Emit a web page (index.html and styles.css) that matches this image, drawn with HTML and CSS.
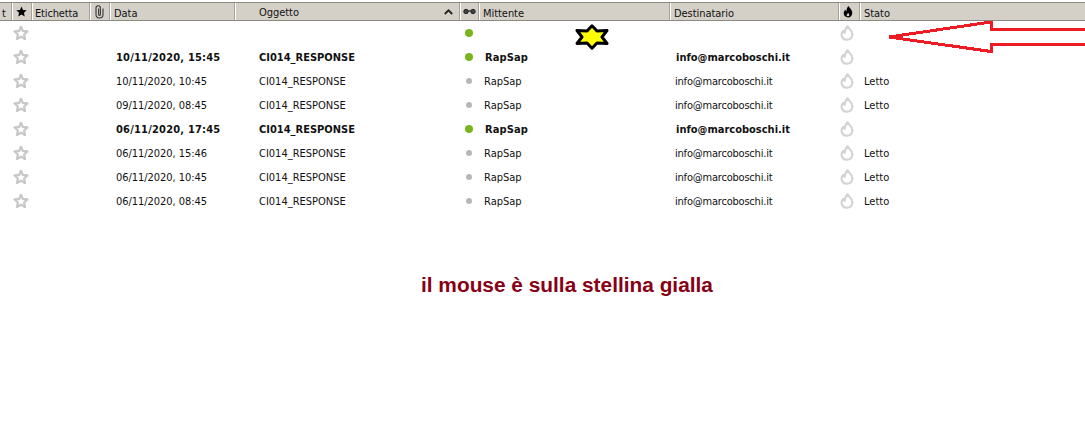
FILE: index.html
```html
<!DOCTYPE html>
<html lang="it">
<head>
<meta charset="utf-8">
<title>Posta</title>
<link rel="stylesheet" href="styles.css">
</head>
<body>
<svg class="sprites" width="0" height="0" aria-hidden="true">
  <symbol id="star" viewBox="0 0 16 16"><path d="M8 1.800l1.900 4.100 4.500.5-3.300 3.100.9 4.500L8 11.700 4 14l.9-4.500L1.600 6.400l4.500-.5z" fill="#fff" stroke="#c8c8c8" stroke-width="2.300" stroke-linejoin="round"/></symbol>
  <symbol id="flame" viewBox="0 0 14 16"><path d="M7.500 1.200c.2 1.900 5 3.500 5 8.200 0 3.200-2.500 5.400-5.500 5.400s-5.500-2.200-5.500-5c0-1.700.8-3.100 1.900-4 .1 1 .4 1.600 1.200 2 .2-2.400 1.200-4.800 2.900-6.600z" fill="#fff" stroke="#d2d2d2" stroke-width="2.100" stroke-linejoin="round"/></symbol>
</svg>
<div class="list">
  <div class="row head">
    <div class="hc"><span class="cut">t</span></div>
    <div class="hc center icon-star"><svg class="ico" width="11" height="11" viewBox="0 0 16 16"><path d="M8 .8l2.200 4.900 5.300.6-3.900 3.600 1.100 5.300L8 12.500l-4.700 2.700 1.100-5.300L.5 6.300l5.300-.6z" fill="#000"/></svg></div>
    <div class="hc label-tight">Etichetta</div>
    <div class="hc center icon-clip"><svg class="ico" width="9" height="14" viewBox="0 0 9 14"><path d="M8 3.500v6a3.500 3.500 0 0 1-7 0V2.900a2.100 2.100 0 0 1 4.400 0V9.500a.9.9 0 0 1-1.800 0V3.500" fill="none" stroke="#333" stroke-width="1.100"/></svg></div>
    <div class="hc">Data</div>
    <div class="hc sort">Oggetto<svg class="caret" width="9" height="6" viewBox="0 0 9 6"><path d="M.8 5L4.500 1.300 8.200 5" fill="none" stroke="#222" stroke-width="1.800"/></svg></div>
    <div class="hc center"><svg class="ico" width="13" height="7" viewBox="0 0 13 7"><circle cx="3" cy="3.500" r="2.200" fill="#444" stroke="#222"/><circle cx="10" cy="3.500" r="2.200" fill="#444" stroke="#222"/><path d="M5 3h3" stroke="#222" stroke-width="1.200"/></svg></div>
    <div class="hc">Mittente</div>
    <div class="hc">Destinatario</div>
    <div class="hc center icon-flame"><svg class="ico" width="10" height="13" viewBox="0 0 14 18"><path d="M7.500 1c.6 2.500 5.500 5 5.500 10 0 3.600-2.800 6.300-6 6.300S1 15 1 11.500c0-2.200 1.100-4 2.500-5.300 0 1.300.4 2.100 1.300 2.600C5 6 6 3.200 7.500 1z" fill="#000"/><path d="M7.300 11c.9 1 1.600 1.700 1.600 2.900A2 2 0 0 1 7 15.700c-1 0-1.900-.8-1.900-1.900 0-1.100 1.400-1.700 2.200-2.800z" fill="#d4d0c8"/></svg></div>
    <div class="hc">Stato</div>
  </div>

  <div class="row msg">
    <div></div><div class="center c-star"><svg class="star"><use href="#star"/></svg></div><div></div><div></div><div class="t-data"></div><div class="t-ogg"></div>
    <div class="center c-dot"><i class="dot on"></i></div><div class="t-mit"></div><div class="t-dest"></div>
    <div class="center c-flame"><svg class="flame"><use href="#flame"/></svg></div><div class="t-stato"></div>
  </div>
  <div class="row msg unread">
    <div></div><div class="center c-star"><svg class="star"><use href="#star"/></svg></div><div></div><div></div><div class="t-data">10/11/2020, 15:45</div><div class="t-ogg">CI014_RESPONSE</div>
    <div class="center c-dot"><i class="dot on"></i></div><div class="t-mit">RapSap</div><div class="t-dest">info@marcoboschi.it</div>
    <div class="center c-flame"><svg class="flame"><use href="#flame"/></svg></div><div class="t-stato"></div>
  </div>
  <div class="row msg">
    <div></div><div class="center c-star"><svg class="star"><use href="#star"/></svg></div><div></div><div></div><div class="t-data">10/11/2020, 10:45</div><div class="t-ogg">CI014_RESPONSE</div>
    <div class="center c-dot"><i class="dot"></i></div><div class="t-mit">RapSap</div><div class="t-dest">info@marcoboschi.it</div>
    <div class="center c-flame"><svg class="flame"><use href="#flame"/></svg></div><div class="t-stato">Letto</div>
  </div>
  <div class="row msg">
    <div></div><div class="center c-star"><svg class="star"><use href="#star"/></svg></div><div></div><div></div><div class="t-data">09/11/2020, 08:45</div><div class="t-ogg">CI014_RESPONSE</div>
    <div class="center c-dot"><i class="dot"></i></div><div class="t-mit">RapSap</div><div class="t-dest">info@marcoboschi.it</div>
    <div class="center c-flame"><svg class="flame"><use href="#flame"/></svg></div><div class="t-stato">Letto</div>
  </div>
  <div class="row msg unread">
    <div></div><div class="center c-star"><svg class="star"><use href="#star"/></svg></div><div></div><div></div><div class="t-data">06/11/2020, 17:45</div><div class="t-ogg">CI014_RESPONSE</div>
    <div class="center c-dot"><i class="dot on"></i></div><div class="t-mit">RapSap</div><div class="t-dest">info@marcoboschi.it</div>
    <div class="center c-flame"><svg class="flame"><use href="#flame"/></svg></div><div class="t-stato"></div>
  </div>
  <div class="row msg">
    <div></div><div class="center c-star"><svg class="star"><use href="#star"/></svg></div><div></div><div></div><div class="t-data">06/11/2020, 15:46</div><div class="t-ogg">CI014_RESPONSE</div>
    <div class="center c-dot"><i class="dot"></i></div><div class="t-mit">RapSap</div><div class="t-dest">info@marcoboschi.it</div>
    <div class="center c-flame"><svg class="flame"><use href="#flame"/></svg></div><div class="t-stato">Letto</div>
  </div>
  <div class="row msg">
    <div></div><div class="center c-star"><svg class="star"><use href="#star"/></svg></div><div></div><div></div><div class="t-data">06/11/2020, 10:45</div><div class="t-ogg">CI014_RESPONSE</div>
    <div class="center c-dot"><i class="dot"></i></div><div class="t-mit">RapSap</div><div class="t-dest">info@marcoboschi.it</div>
    <div class="center c-flame"><svg class="flame"><use href="#flame"/></svg></div><div class="t-stato">Letto</div>
  </div>
  <div class="row msg">
    <div></div><div class="center c-star"><svg class="star"><use href="#star"/></svg></div><div></div><div></div><div class="t-data">06/11/2020, 08:45</div><div class="t-ogg">CI014_RESPONSE</div>
    <div class="center c-dot"><i class="dot"></i></div><div class="t-mit">RapSap</div><div class="t-dest">info@marcoboschi.it</div>
    <div class="center c-flame"><svg class="flame"><use href="#flame"/></svg></div><div class="t-stato">Letto</div>
  </div>
</div>

<p class="note">il mouse è sulla stellina gialla</p>

<svg class="mark" width="34" height="26" viewBox="0 0 34 26"><path d="M17 1.800L22 7l10-.5L27 13l5 6.500-10-.5-5 5.200-5-5.200-10 .5L7 13 2 6.500 12 7z" fill="#ffff00" stroke="#000" stroke-width="3" stroke-linejoin="round"/></svg>
<svg class="arrow" width="197" height="34" viewBox="0 0 197 34"><path d="M197 8.500H103V1L1 16l102 14.500v-7h94" fill="none" stroke="#ed1c24" stroke-width="3" shape-rendering="crispEdges"/></svg>
</body>
</html>
```

FILE: styles.css
```css
html, body {
  margin: 0;
  padding: 0;
  background: #fff;
}
body {
  position: relative;
  width: 1085px;
  height: 437px;
  overflow: hidden;
  font-family: "DejaVu Sans Condensed", "DejaVu Sans", sans-serif;
  font-size: 11px;
  color: #111;
}
.sprites { position: absolute; }
.list { padding-top: 2px; }
.row {
  display: grid;
  grid-template-columns: 12px 20px 58px 20px 125px 225px 19px 191px 169px 21px 1fr;
  align-items: center;
}
.head {
  height: 17px;
  background: #d4d0c8;
  border-top: 1px solid #8c8a85;
  border-bottom: 1px solid #8c8a85;
  box-sizing: content-box;
}
.hc {
  height: 17px;
  line-height: 21px;
  padding-left: 4px;
  box-sizing: border-box;
  border-right: 1px solid #a5a29c;
  box-shadow: 1px 0 0 #fff;
  white-space: nowrap;
  overflow: hidden;
  letter-spacing: -0.05px;
}
.hc:last-child { border-right: 0; box-shadow: none; }
.hc.center {
  padding-left: 0;
  display: flex;
  align-items: center;
  justify-content: center;
}
.label-tight { padding-left: 3px; letter-spacing: -0.15px; }
.icon-star, .icon-clip { padding-right: 1px; }
.hc.icon-flame { padding-right: 3px; }
.sort {
  display: flex;
  align-items: center;
  justify-content: space-between;
  padding-right: 6px;
  padding-left: 24px;
  padding-top: 2px;
}
.caret { margin-top: -2px; }
.cut { margin-left: -2px; }
.msg { height: 24px; line-height: 22px; }
.center {
  display: flex;
  align-items: center;
  justify-content: center;
}
.c-star { padding-right: 2px; }
.c-dot { padding-right: 1px; }
.c-flame { padding-right: 5px; }
.star { width: 16px; height: 16px; }
.flame { width: 14px; height: 16px; }
.dot {
  width: 6px;
  height: 6px;
  border-radius: 50%;
  background: #b8b8b8;
}
.dot.on {
  width: 8px;
  height: 8px;
  background: #7ab51d;
}
.t-data, .t-ogg, .t-mit, .t-dest, .t-stato { padding-top: 2px; }
.t-data { padding-left: 6px; letter-spacing: -0.05px; }
.t-ogg { padding-left: 24px; }
.t-mit { padding-left: 5px; }
.t-dest { padding-left: 5px; letter-spacing: -0.2px; }
.t-stato { padding-left: 4px; }
.unread { font-weight: 700; }
.unread .t-data { letter-spacing: 0.2px; }
.unread .t-mit { padding-left: 6px; letter-spacing: 0.1px; }
.unread .t-dest { padding-left: 6px; letter-spacing: 0; }
.note {
  position: absolute;
  left: 421px;
  top: 272px;
  margin: 0;
  font: 700 20.85px/26px "Liberation Sans", Arial, sans-serif;
  color: #880015;
}
.mark { position: absolute; left: 575px; top: 24px; }
.arrow { position: absolute; left: 888px; top: 21px; }
```
